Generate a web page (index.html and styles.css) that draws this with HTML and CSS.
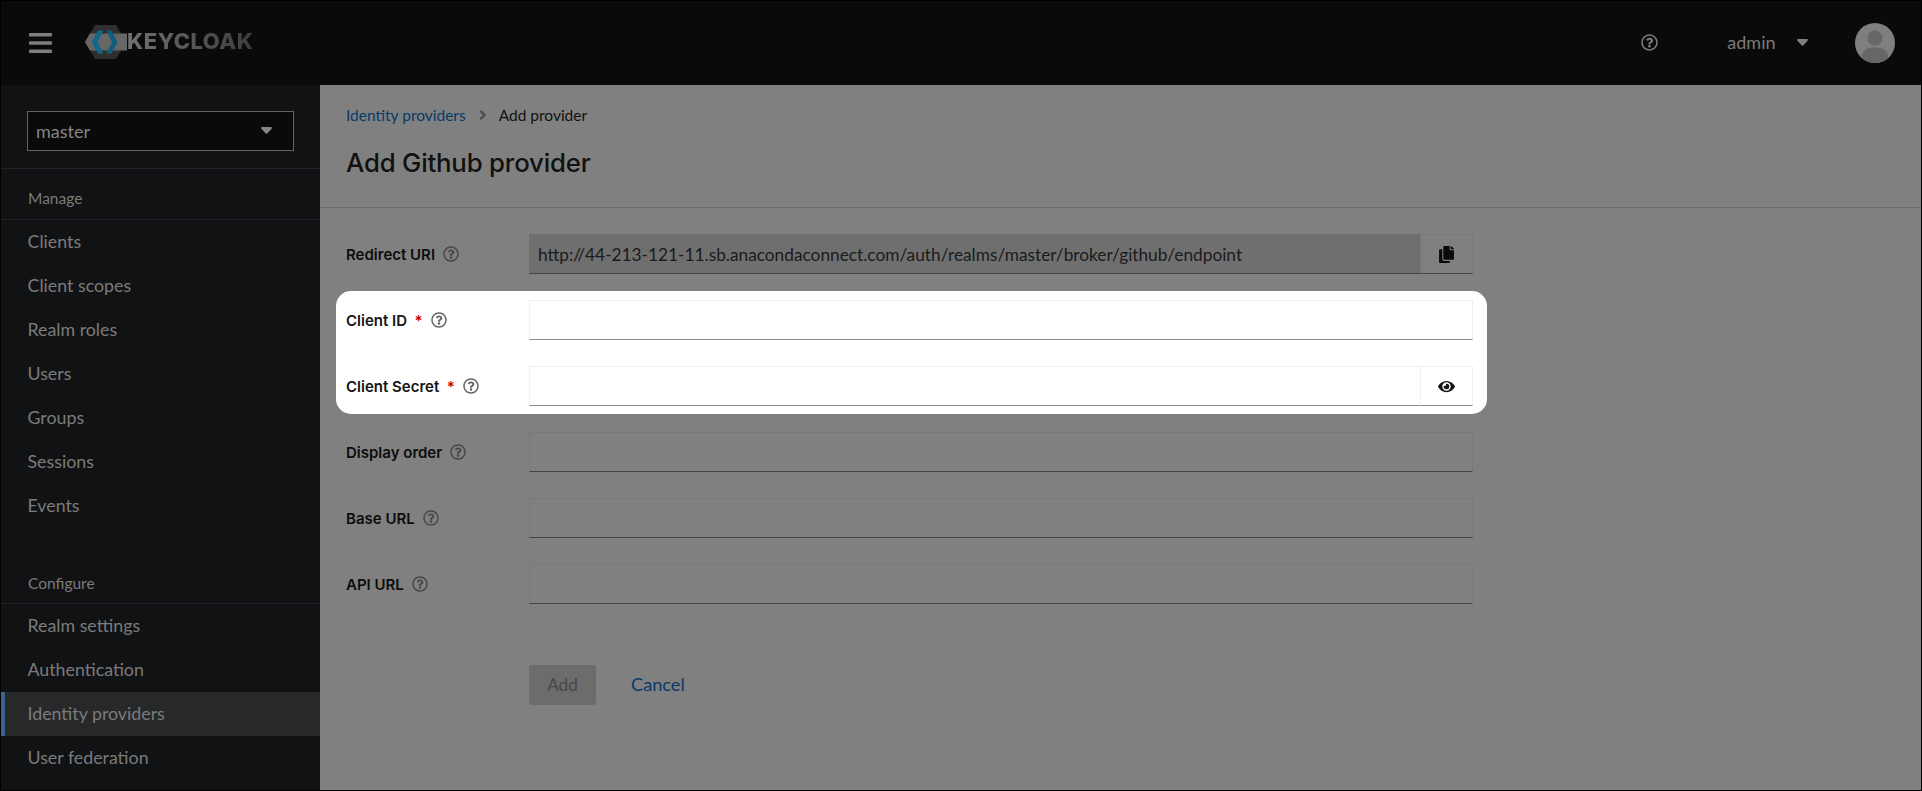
FILE: index.html
```html
<!DOCTYPE html>
<html lang="en">
<head>
<meta charset="utf-8">
<title>Add Github provider</title>
<link rel="stylesheet" href="styles.css">
</head>
<body>
<svg class="defs" width="0" height="0" aria-hidden="true">
  <symbol id="q" viewBox="0 0 512 512"><path d="M256 8C119.043 8 8 119.083 8 256c0 136.997 111.043 248 248 248s248-111.003 248-248C504 119.083 392.957 8 256 8zm0 448c-110.532 0-200-89.431-200-200 0-110.495 89.472-200 200-200 110.491 0 200 89.471 200 200 0 110.53-89.431 200-200 200zm107.244-255.2c0 67.052-72.421 68.084-72.421 92.863V300c0 6.627-5.373 12-12 12h-45.647c-6.627 0-12-5.373-12-12v-8.659c0-35.745 27.1-50.034 47.579-61.516 17.561-9.845 28.324-16.541 28.324-29.579 0-17.246-21.999-28.693-39.784-28.693-23.189 0-33.894 10.977-48.942 29.969-4.057 5.12-11.46 6.071-16.666 2.124l-27.824-21.098c-5.107-3.872-6.251-11.066-2.644-16.363C184.846 131.491 214.94 112 261.794 112c49.071 0 101.45 38.304 101.45 88.8zM298 368c0 23.159-18.841 42-42 42s-42-18.841-42-42 18.841-42 42-42 42 18.841 42 42z"/></symbol>
  <symbol id="caret" viewBox="0 0 16 10"><path d="M1.500 0h13c1.200 0 1.800 1.400 1 2.300L9 9.300c-.6.6-1.500.6-2 0L.5 2.300C-.3 1.400.3 0 1.500 0z"/></symbol>
</svg>
<div class="app">
  <header class="topbar">
    <svg class="burger" viewBox="0 0 23 20" aria-hidden="true"><rect width="23" height="3.600" y="0" rx="1"/><rect width="23" height="3.600" y="8.200" rx="1"/><rect width="23" height="3.600" y="16.400" rx="1"/></svg>
    <div class="logo">
      <svg class="logo-mark" viewBox="0 0 44 34" aria-hidden="true">
        <polygon points="0,17 10,0 31,0 41,17 31,34 10,34" fill="#2f2f2f"/>
        <polygon points="0,17 5,8.500 42,8.500 42,25.500 5,25.500" fill="#676767"/>
        <path d="M13 5.500 L18.500 5.500 L12.500 17 L18.500 28.500 L13 28.500 L6.700 17 Z" fill="#11688a"/>
        <path d="M21.500 5.500 L26.500 5.500 L32.500 17 L26.500 28.500 L21.500 28.500 L27 17 Z" fill="#0f5d7d"/>
      </svg>
      <span class="logo-text">KEYCLOAK</span>
    </div>
    <div class="spacer"></div>
    <svg class="help"><use href="#q"/></svg>
    <span class="user">admin</span>
    <svg class="user-caret"><use href="#caret"/></svg>
    <svg class="avatar" viewBox="0 0 40 40" aria-hidden="true">
      <defs><clipPath id="av"><circle cx="20" cy="20" r="20"/></clipPath></defs>
      <g clip-path="url(#av)">
        <rect width="40" height="40" fill="#7f7f7f"/>
        <circle cx="20" cy="15" r="7.500" fill="#676767"/>
        <path d="M7 40 V33 C7 27 13 24.500 20 24.500 S33 27 33 33 V40 Z" fill="#676767"/>
      </g>
    </svg>
  </header>
  <div class="body">
    <nav class="sidebar">
      <div class="realm-wrap">
        <div class="realm"><span>master</span><svg class="realm-caret"><use href="#caret"/></svg></div>
      </div>
      <div class="nav-title">Manage</div>
      <ul class="nav-list">
        <li>Clients</li>
        <li>Client scopes</li>
        <li>Realm roles</li>
        <li>Users</li>
        <li>Groups</li>
        <li>Sessions</li>
        <li>Events</li>
      </ul>
      <div class="nav-title nav-title-second">Configure</div>
      <ul class="nav-list">
        <li>Realm settings</li>
        <li>Authentication</li>
        <li class="current">Identity providers</li>
        <li>User federation</li>
      </ul>
    </nav>
    <main class="main">
      <section class="page-head">
        <div class="crumbs">
          <a class="link">Identity providers</a>
          <svg class="crumb-sep" viewBox="0 0 8 12" aria-hidden="true"><path d="M1.500 1 L6.500 6 L1.500 11" fill="none" stroke-width="2.800"/></svg>
          <span>Add provider</span>
        </div>
        <h1>Add Github provider</h1>
      </section>
      <form class="form">
        <div class="row">
          <div class="label"><b>Redirect URI</b><svg class="q"><use href="#q"/></svg></div>
          <div class="group">
            <div class="input readonly">http://44-213-121-11.sb.anacondaconnect.com/auth/realms/master/broker/github/endpoint</div>
            <div class="addon"><svg class="copy" viewBox="0 0 448 512" aria-hidden="true"><path d="M320 448v40c0 13.255-10.745 24-24 24H24c-13.255 0-24-10.745-24-24V120c0-13.255 10.745-24 24-24h72v296c0 30.879 25.121 56 56 56h168zm0-344V0H152c-13.255 0-24 10.745-24 24v368c0 13.255 10.745 24 24 24h272c13.255 0 24-10.745 24-24V128H344c-13.200 0-24-10.800-24-24zm120.971-31.029L375.029 7.029A24 24 0 0 0 358.059 0H352v96h96v-6.059a24 24 0 0 0-7.029-16.970z"/></svg></div>
          </div>
        </div>
        <div class="spot">
          <div class="row">
            <div class="label"><b>Client ID</b><i>*</i><svg class="q"><use href="#q"/></svg></div>
            <div class="group"><div class="input"></div></div>
          </div>
          <div class="row">
            <div class="label"><b>Client Secret</b><i>*</i><svg class="q"><use href="#q"/></svg></div>
            <div class="group">
              <div class="input"></div>
              <div class="addon"><svg class="eye" viewBox="0 0 576 512" aria-hidden="true"><path d="M572.520 241.400C518.290 135.590 410.930 64 288 64S57.680 135.640 3.480 241.410a32.350 32.350 0 0 0 0 29.190C57.710 376.410 165.070 448 288 448s230.320-71.640 284.520-177.410a32.350 32.350 0 0 0 0-29.190zM288 400a144 144 0 1 1 144-144 143.930 143.930 0 0 1-144 144zm0-240a95.310 95.310 0 0 0-25.310 3.790 47.850 47.850 0 0 1-66.900 66.900A95.780 95.780 0 1 0 288 160z"/></svg></div>
            </div>
          </div>
        </div>
        <div class="row">
          <div class="label"><b>Display order</b><svg class="q"><use href="#q"/></svg></div>
          <div class="group"><div class="input"></div></div>
        </div>
        <div class="row">
          <div class="label"><b>Base URL</b><svg class="q"><use href="#q"/></svg></div>
          <div class="group"><div class="input"></div></div>
        </div>
        <div class="row">
          <div class="label"><b>API URL</b><svg class="q"><use href="#q"/></svg></div>
          <div class="group"><div class="input"></div></div>
        </div>
        <div class="actions">
          <span class="btn">Add</span>
          <a class="link cancel">Cancel</a>
        </div>
      </form>
    </main>
  </div>
</div>
</body>
</html>
```
FILE: styles.css
```css
* { box-sizing: border-box; }
html, body { margin: 0; height: 100%; background: #000; }
body { font-family: Lato, "Noto Sans", sans-serif; overflow: hidden; }
.defs { position: absolute; }
.app { width: 1922px; height: 791px; border: 1px solid #000; display: flex; flex-direction: column; overflow: hidden; }
.topbar { height: 84px; flex: none; background: #0a0a0a; display: flex; align-items: center; color: #7b7b7b; }
.burger { width: 23px; height: 20px; margin-left: 28px; fill: #7f7f7f; margin-top: -1px; }
.logo { display: flex; align-items: center; margin-left: 33px; margin-top: -3px; }
.logo-mark { width: 44px; height: 34px; }
.logo-text { font-family: Inter, "Liberation Sans", sans-serif; font-weight: 800; font-size: 22px; line-height: 1; letter-spacing: 0.5px; margin: -1px 0 0 -2px; background: linear-gradient(90deg, #727272, #3c3c3c); -webkit-background-clip: text; background-clip: text; color: transparent; }
.spacer { flex: 1; }
.help { width: 17px; height: 17px; fill: #7b7b7b; margin-right: 69px; margin-top: -2px; }
.user { font-size: 18px; margin-right: 21px; margin-top: -2px; }
.user-caret { width: 11px; height: 7px; fill: #7f7f7f; margin-right: 47.500px; margin-top: -1px; }
.avatar { width: 40px; height: 40px; margin-right: 26px; }
.body { flex: 1; display: flex; min-height: 0; }
.sidebar { width: 319px; flex: none; background: #111214; color: #7b7b7b; font-size: 17.800px; overflow: hidden; }
.realm-wrap { height: 84px; padding: 26px 26px 0; border-bottom: 1px solid #222427; }
.realm { height: 40px; border: 1px solid #636363; background: #0a0a0a; display: flex; align-items: center; justify-content: space-between; padding: 0 21px 0 8px; color: #858585; font-size: 18px; line-height: 36px; }
.realm span { margin-top: -1px; }
.realm-caret { width: 11px; height: 7px; fill: #858585; margin-top: -2px; }
.nav-title { height: 51px; padding: 19px 27px 0; font-size: 15.500px; line-height: 20px; border-bottom: 1px solid #1e2023; }
.nav-title-second { margin-top: 26px; height: 50px; }
.nav-list { list-style: none; margin: 0; padding: 0; }
.nav-list li { height: 44px; line-height: 42px; padding-left: 26.500px; }
.nav-list li.current { background: #27282a; border-left: 4px solid #376488; padding-left: 22.500px; }
.main { flex: 1; background: #808080; min-width: 0; }
.page-head { height: 123px; padding: 20px 26px 0; border-bottom: 1px solid #6c6c6c; }
.crumbs { display: flex; align-items: center; height: 20px; font-size: 15.500px; color: #111; }
.link { color: #083a66; }
.crumb-sep { width: 7px; height: 10px; stroke: #4c4c4c; margin: 0 13px 0 13px; }
h1 { margin: 20px 0 0; font-family: Inter, sans-serif; font-size: 25.800px; line-height: 36px; font-weight: 500; color: #111; letter-spacing: -0.2px; }
.form { padding: 26px 0 0 26px; width: 1153px; }
.row { display: grid; grid-template-columns: 183px 1fr; align-items: center; height: 40px; margin-bottom: 26px; }
.label { display: flex; align-items: center; font-family: Inter, sans-serif; font-size: 15px; color: #0c0c0c; }
.label b { font-weight: 600; }
.label i { font-style: normal; color: #c00; margin-left: 7.500px; font-weight: 600; }
.q { width: 16px; height: 16px; fill: #484848; margin-left: 8px; }
.spot .q { fill: #666; }
.label i + .q { margin-left: 8.500px; }
.group { display: flex; height: 40px; }
.input { flex: 1; border: 1px solid #797979; border-bottom-color: #454545; font-size: 17.300px; line-height: 38px; padding: 1px 0 0 8px; color: #1b1b1b; }
.readonly { background: #6f6f6f; border-color: #6f6f6f; border-bottom-color: #454545; }
.addon { width: 53px; flex: none; display: flex; align-items: center; justify-content: center; border: 1px solid #797979; border-left: 1px solid #757575; border-bottom-color: #454545; margin-left: -1px; }
.copy { width: 15px; height: 17px; fill: #0a0a0a; }
.eye { width: 17px; height: 15px; fill: #151515; }
.spot { background: #fff; border-radius: 15px; margin: -9px -14px 18px -10px; padding: 9px 14px 8px 10px; }
.spot .row:last-child { margin-bottom: 0; }
.spot .label { color: #151515; }
.spot .input, .spot .addon { border-color: #f0f0f0; border-bottom-color: #8a8a8a; }
.actions { display: flex; align-items: center; margin: 61px 0 0 183px; height: 40px; font-size: 17.200px; }
.btn { width: 67px; height: 40px; border-radius: 3px; background: #6c6c6c; color: #474747; display: flex; align-items: center; justify-content: center; padding-bottom: 2px; }
.cancel { margin: -2px 0 0 35px; font-size: 18.200px; }
```
